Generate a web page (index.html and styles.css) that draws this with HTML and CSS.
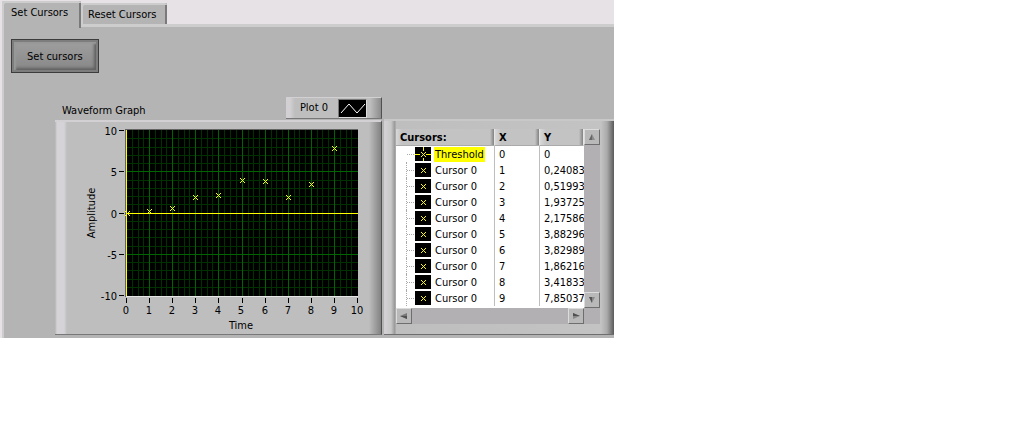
FILE: index.html
```
<!DOCTYPE html>
<html lang="en">
<head>
<meta charset="utf-8">
<title>Set Cursors</title>
<link rel="stylesheet" href="styles.css">
</head>
<body>
<main class="panel">
  <div class="tabs" role="tablist">
    <button class="tab tab-active" role="tab" aria-selected="true">Set Cursors</button>
    <button class="tab" role="tab" aria-selected="false">Reset Cursors</button>
  </div>
  <section class="page">
    <button class="action">Set cursors</button>
    <div class="content">
      <div class="graph">
        <div class="graph-head">
          <h1 class="title">Waveform Graph</h1>
          <div class="legend">
            <span>Plot 0</span>
            <svg class="swatch" width="29" height="19" viewBox="0 0 27 17"><path d="M2 13L10 4L18 13L26 4" fill="none" stroke="#fff"/></svg>
          </div>
        </div>
        <div class="graph-frame">
          <svg class="plot" width="302" height="206" viewBox="-54 -5 302 206" role="img" aria-label="Waveform Graph">
            <defs><path id="mark" d="M-2 -2h1v1h-1zM2 -2h1v1h-1zM-1 -1h1v1h-1zM1 -1h1v1h-1zM0 0h1v1h-1zM-1 1h1v1h-1zM1 1h1v1h-1zM-2 2h1v1h-1zM2 2h1v1h-1z"/></defs>
            <g shape-rendering="crispEdges">
              <path d="M-1 -1h233v168h-233z" fill="#e6e6e6"/>
              <path d="M-1 -1h233v1h-232v167h-1z" fill="#646464"/>
              <path d="M0 0h232v166h-232z" fill="#000"/>
              <path class="minor" d="M6.500 0v166M12.500 0v166M17.500 0v166M29.500 0v166M35.500 0v166M40.500 0v166M52.500 0v166M58.500 0v166M63.500 0v166M75.500 0v166M81.500 0v166M86.500 0v166M98.500 0v166M104.500 0v166M110.500 0v166M122.500 0v166M127.500 0v166M133.500 0v166M145.500 0v166M150.500 0v166M156.500 0v166M168.500 0v166M173.500 0v166M179.500 0v166M191.500 0v166M196.500 0v166M202.500 0v166M214.500 0v166M220.500 0v166M225.500 0v166M0 8.500h232M0 17.500h232M0 25.500h232M0 33.500h232M0 50.500h232M0 58.500h232M0 66.500h232M0 74.500h232M0 91.500h232M0 99.500h232M0 107.500h232M0 116.500h232M0 132.500h232M0 140.500h232M0 149.500h232M0 157.500h232"/>
              <path class="major" d="M23.500 0v166M46.500 0v166M69.500 0v166M92.500 0v166M116.500 0v166M139.500 0v166M162.500 0v166M185.500 0v166M208.500 0v166M0 41.500h232M0 124.500h232"/>
              <path class="cursor-line" d="M0.500 0v166M0 83.500h232"/>
              <path class="tick" d="M-7 .5h5M-7 41.500h5M-7 83.500h5M-7 124.500h5M-7 165.500h5M.5 168v5M23.500 168v5M46.500 168v5M69.500 168v5M92.500 168v5M116.500 168v5M139.500 168v5M162.500 168v5M185.500 168v5M208.500 168v5M231.500 168v5"/>
              <g fill="#ff0">
                <use href="#mark" x="1" y="83"/><use href="#mark" x="23" y="81"/><use href="#mark" x="46" y="78"/><use href="#mark" x="69" y="67"/><use href="#mark" x="92" y="65"/><use href="#mark" x="116" y="50"/><use href="#mark" x="139" y="51"/><use href="#mark" x="162" y="67"/><use href="#mark" x="185" y="54"/><use href="#mark" x="208" y="18"/>
              </g>
            </g>
            <g class="label label-y">
              <text x="-9" y="5">10</text><text x="-9" y="46">5</text><text x="-9" y="88">0</text><text x="-9" y="129">-5</text><text x="-9" y="170">-10</text>
            </g>
            <g class="label label-x">
              <text x="0" y="184">0</text><text x="23" y="184">1</text><text x="46" y="184">2</text><text x="69" y="184">3</text><text x="92" y="184">4</text><text x="115" y="184">5</text><text x="139" y="184">6</text><text x="162" y="184">7</text><text x="185" y="184">8</text><text x="208" y="184">9</text><text x="231" y="184">10</text>
              <text x="115" y="199">Time</text>
              <text transform="translate(-31 83) rotate(-90)">Amplitude</text>
            </g>
          </svg>
        </div>
      </div>
      <div class="cursor-frame">
        <div class="list">
          <table class="cursors">
            <colgroup><col class="col-name"><col class="col-x"><col class="col-y"></colgroup>
            <thead><tr><th>Cursors:</th><th>X</th><th>Y</th></tr></thead>
            <tbody>
              <tr><td class="name"><span class="row row-selected"><svg class="icon" width="16" height="14" viewBox="0 0 16 14"><path d="M0 7.500h5M11 7.500h5M8.500 0v4M8.500 11v3" stroke="#ff0"/><use href="#mark" x="8" y="7"/></svg><span class="text">Threshold</span></span></td><td>0</td><td>0</td></tr>
              <tr><td class="name"><span class="row"><svg class="icon" width="16" height="14" viewBox="0 0 16 14"><use href="#mark" x="8" y="7"/></svg><span class="text">Cursor 0</span></span></td><td>1</td><td>0,24083</td></tr>
              <tr><td class="name"><span class="row"><svg class="icon" width="16" height="14" viewBox="0 0 16 14"><use href="#mark" x="8" y="7"/></svg><span class="text">Cursor 0</span></span></td><td>2</td><td>0,51993</td></tr>
              <tr><td class="name"><span class="row"><svg class="icon" width="16" height="14" viewBox="0 0 16 14"><use href="#mark" x="8" y="7"/></svg><span class="text">Cursor 0</span></span></td><td>3</td><td>1,93725</td></tr>
              <tr><td class="name"><span class="row"><svg class="icon" width="16" height="14" viewBox="0 0 16 14"><use href="#mark" x="8" y="7"/></svg><span class="text">Cursor 0</span></span></td><td>4</td><td>2,17586</td></tr>
              <tr><td class="name"><span class="row"><svg class="icon" width="16" height="14" viewBox="0 0 16 14"><use href="#mark" x="8" y="7"/></svg><span class="text">Cursor 0</span></span></td><td>5</td><td>3,88296</td></tr>
              <tr><td class="name"><span class="row"><svg class="icon" width="16" height="14" viewBox="0 0 16 14"><use href="#mark" x="8" y="7"/></svg><span class="text">Cursor 0</span></span></td><td>6</td><td>3,82989</td></tr>
              <tr><td class="name"><span class="row"><svg class="icon" width="16" height="14" viewBox="0 0 16 14"><use href="#mark" x="8" y="7"/></svg><span class="text">Cursor 0</span></span></td><td>7</td><td>1,86216</td></tr>
              <tr><td class="name"><span class="row"><svg class="icon" width="16" height="14" viewBox="0 0 16 14"><use href="#mark" x="8" y="7"/></svg><span class="text">Cursor 0</span></span></td><td>8</td><td>3,41833</td></tr>
              <tr><td class="name"><span class="row"><svg class="icon" width="16" height="14" viewBox="0 0 16 14"><use href="#mark" x="8" y="7"/></svg><span class="text">Cursor 0</span></span></td><td>9</td><td>7,85037</td></tr>
            </tbody>
          </table>
          <div class="scroll scroll-v">
            <button class="arrow" aria-label="Scroll up"><svg width="8" height="8" viewBox="0 0 8 8"><path d="M4 1L7 7H1z" fill="#8a8a8a"/><path d="M4 1L1 7H4z" fill="#666"/></svg></button>
            <button class="arrow" aria-label="Scroll down"><svg width="8" height="8" viewBox="0 0 8 8"><path d="M1 1H7L4 7z" fill="#8a8a8a"/><path d="M1 1H4V7z" fill="#555"/></svg></button>
          </div>
          <div class="scroll scroll-h">
            <button class="arrow" aria-label="Scroll left"><svg width="8" height="8" viewBox="0 0 8 8"><path d="M0 4L7 1V7z" fill="#777"/><path d="M0 4H7V7z" fill="#505050"/></svg></button>
            <button class="arrow" aria-label="Scroll right"><svg width="8" height="8" viewBox="0 0 8 8"><path d="M1 1L8 4L1 7z" fill="#888"/><path d="M1 1L8 4H1z" fill="#505050"/></svg></button>
          </div>
        </div>
      </div>
    </div>
  </section>
</main>
</body>
</html>
```
FILE: styles.css
```
* { box-sizing: border-box; }
body { margin: 0; background: #fff; }
body, button { font: 11px/16px "DejaVu Sans Condensed", "DejaVu Sans", sans-serif; color: #000; }
svg { display: block; flex: none; }
.panel { width: fit-content; background: #e6e2e6; padding-left: 2px; }

.tabs { display: flex; align-items: flex-end; height: 24px; }
.tab {
  height: 21px; padding: 2px 10px 0 7px; border: 0;
  background: #b4b4b4; border-radius: 2px 2px 0 0;
  box-shadow: inset 2px 2px #cdcdcd, inset -2px 0 #7a7a7a;
  white-space: nowrap;
}
.tab-active {
  height: 27px; margin-bottom: -4px; padding: 0 13px 4px 9px;
  position: relative;
}

.page {
  background: #b4b4b4; border-left: 2px solid #cdcdcd;
  border-top: 3px solid #cdcdcd; padding: 12px 0 3px 7px;
}
.action {
  display: block; height: 34px; padding: 2px 15px 0; color: #000;
  border: 1px solid #3c3c3c;
  background: linear-gradient(#a0a0a0, #868686);
  box-shadow: inset 0 0 0 2px #7d7d7d, inset 4px 4px 2px #989898, inset -4px -4px 3px #606060;
}
.content { display: flex; align-items: flex-end; gap: 2px; margin-top: 24px; padding-left: 44px; }

.graph-head { display: flex; justify-content: space-between; align-items: stretch; height: 22px; margin-bottom: 1px; padding-left: 7px; }
.title { margin: 6px 0 0; font-size: 11px; font-weight: 400; }
.legend {
  display: flex; align-items: center; gap: 10px; padding: 0 14px;
  background: linear-gradient(90deg, #d2d0d2 0 4px, #bebebe 9px, #bebebe calc(100% - 11px), #8c8c8c);
  border-top: 1px solid #d2d0d2; border-right: 1px solid #505050; border-bottom: 1px solid #787878;
}
.swatch { background: #000; border: 1px solid; border-color: #787878 #ddd #ddd #787878; }
.graph-frame {
  padding: 3px 7px 3px 17px;
  background: linear-gradient(90deg, #b4b4b4 0, #d5d3d7 2px 9px, #bebebe 12px, #bebebe calc(100% - 12px), #828282);
  border-top: 2px solid #d2d0d2; border-right: 1px solid #505050; border-bottom: 1px solid #787878;
}
.label { font-size: 11px; }
.label-y { text-anchor: end; }
.label-x { text-anchor: middle; }
.minor, .major, .cursor-line, .tick { fill: none; }
.minor { stroke: #003200; }
.major { stroke: #006400; }
.cursor-line { stroke: #ff0; }
.tick { stroke: #000; }

.cursor-frame {
  padding: 8px 14px 10px 12px;
  background: linear-gradient(90deg, #d2d0d2 0 2px, #c8c8c8 7px, #969696 11px, #bebebe 12px, #c3c3c3 calc(100% - 13px), #aaa calc(100% - 7px), #5a5a5a);
  border-top: 2px solid #c8c8c8; border-bottom: 1px solid #6e6e6e;
}
.list { display: grid; grid-template-columns: 188px 16px; background: linear-gradient(90deg, #fff 188px, #b2b0b2 188px); }
.cursors { width: 188px; table-layout: fixed; border-collapse: separate; border-spacing: 0; margin-bottom: 2px; background: #fff; }
.col-name { width: 99px; }
.col-x { width: 45px; }
.col-y { width: 44px; }
.cursors th {
  height: 17px; padding: 0 0 0 4px; font-weight: 700; line-height: 15px; text-align: left;
  border-right: 1px solid #e6e6e6; border-bottom: 1px solid #aaa;
  background: linear-gradient(90deg, #d8d8d8, #c3c3c3 6px, #c3c3c3 calc(100% - 4px), #828282);
}
.cursors td { height: 16px; padding: 0 0 0 4px; line-height: 15px; overflow: hidden; white-space: nowrap; border-right: 1px solid #bebebe; }
.cursors td:last-child { border-right: 0; }
.cursors .name { padding-left: 10px; }
.row { display: flex; align-items: center; height: 16px; }
.row::before { content: ""; width: 8px; height: 16px; border-left: 1px dotted #aaa; background: repeating-linear-gradient(90deg, #aaa 0 1px, transparent 1px 2px) 0 8px / 100% 1px no-repeat; }
.row-selected::before { border-left-color: transparent; }
.icon { background: #000; fill: #ff0; shape-rendering: crispEdges; }
.text { height: 15px; padding: 0 1px; margin-left: 3px; }
.row-selected .text { background: #ff0; }
.scroll { display: flex; justify-content: space-between; }
.scroll-v { flex-direction: column; }
.scroll-h { background: #b2b0b2; }
.scroll-h + .scroll-h, .list::after { content: ""; background: #b2b0b2; }
.arrow {
  display: grid; place-items: center; width: 16px; height: 16px; padding: 0;
  background: #b9b9b9; border: 1px solid; border-color: #dcdcdc #6e6e6e #6e6e6e #dcdcdc;
}
```
